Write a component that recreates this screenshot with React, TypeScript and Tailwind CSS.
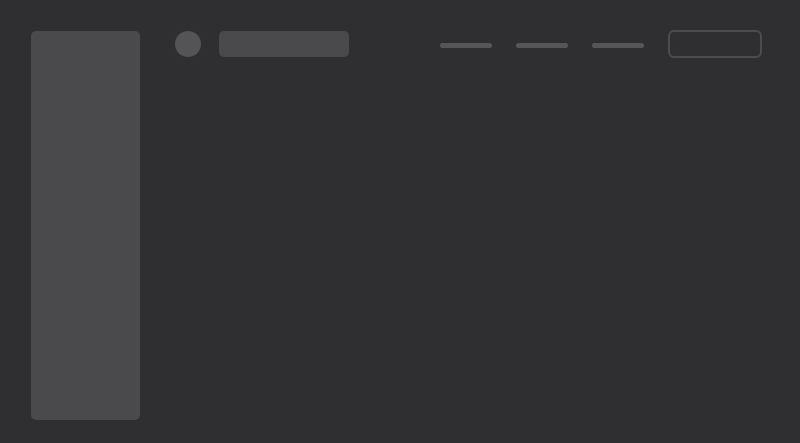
import React from 'react';

const NavLine: React.FC = () => <div className="w-[52px] h-[5px] rounded-full bg-[#565658]" />;

export default function App() {
    return (
        <div className="w-[800px] h-[443px] bg-[#2f2f31] flex items-start pt-[31px] pl-[31px] pr-[38px] overflow-hidden">
            {/* Sidebar */}
            <aside className="w-[109px] h-[389px] rounded-[5px] bg-[#4a4a4c] shrink-0" />

            {/* Header */}
            <header className="flex-1 flex items-center ml-[35px] h-[26px]">
                <div className="w-[26px] h-[26px] rounded-full bg-[#545456]" />
                <div className="ml-[18px] w-[130px] h-[26px] rounded-[5px] bg-[#4a4a4c]" />
                <nav className="ml-auto flex items-center gap-[24px]">
                    <div className="mt-[3px] flex gap-[24px]">
                        <NavLine />
                        <NavLine />
                        <NavLine />
                    </div>
                    <div className="w-[94px] h-[28px] rounded-[6px] border-2 border-[#4c4c4e]" />
                </nav>
            </header>
        </div>
    );
}
